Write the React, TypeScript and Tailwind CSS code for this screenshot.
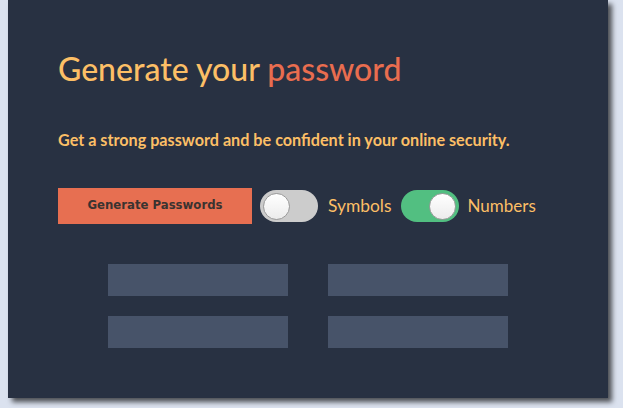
import React from "react";

function Toggle({ on }: { on: boolean }) {
  return (
    <div
      className={
        on
          ? "w-[58px] h-[32px] rounded-full bg-[#52bf81] flex items-center justify-end px-[3px]"
          : "w-[58px] h-[32px] rounded-full bg-[#cccccc] flex items-center justify-start px-[3px]"
      }
    >
      <div className="w-[27px] h-[27px] rounded-full bg-gradient-to-b from-white to-[#ececec] border border-[#9a9a9a]" />
    </div>
  );
}

export default function App() {
  return (
    <div className="w-[623px] h-[408px] bg-[#dbe2ef] overflow-hidden">
      <div
        className="ml-[8px] w-[600px] h-[398px] bg-[#283142] shadow-[4px_4px_5px_rgba(0,0,0,0.65)] pl-[50px] pt-[50px]"
        style={{ fontFamily: "Lato, 'Open Sans', sans-serif" }}
      >
        <h1 className="text-[32px] leading-[38px] font-medium text-[#fcbf66]">
          Generate your <span className="text-[#e96d4f]">password</span>
        </h1>
        <p className="mt-[42px] text-[16.2px] leading-[20px] font-bold text-[#fcbf66]">
          Get a strong password and be confident in your online security.
        </p>
        <div className="mt-[38px] flex items-center">
          <button
            className="w-[194px] h-[36px] bg-[#e76f51] text-[#3a3330] text-[11.7px] font-bold"
            style={{ fontFamily: "'DejaVu Sans', Verdana, sans-serif" }}
          >
            Generate Passwords
          </button>
          <div className="ml-[8px]">
            <Toggle on={false} />
          </div>
          <span className="ml-[10px] text-[17.4px] text-[#fcbf66]">Symbols</span>
          <div className="ml-[9px]">
            <Toggle on={true} />
          </div>
          <span className="ml-[9px] text-[17px] text-[#fcbf66]">Numbers</span>
        </div>
        <div className="mt-[40px] ml-[50px] grid grid-cols-[180px_180px] gap-x-[40px] gap-y-[20px]">
          <div className="h-[32px] bg-[#475369]" />
          <div className="h-[32px] bg-[#475369]" />
          <div className="h-[32px] bg-[#475369]" />
          <div className="h-[32px] bg-[#475369]" />
        </div>
      </div>
    </div>
  );
}
